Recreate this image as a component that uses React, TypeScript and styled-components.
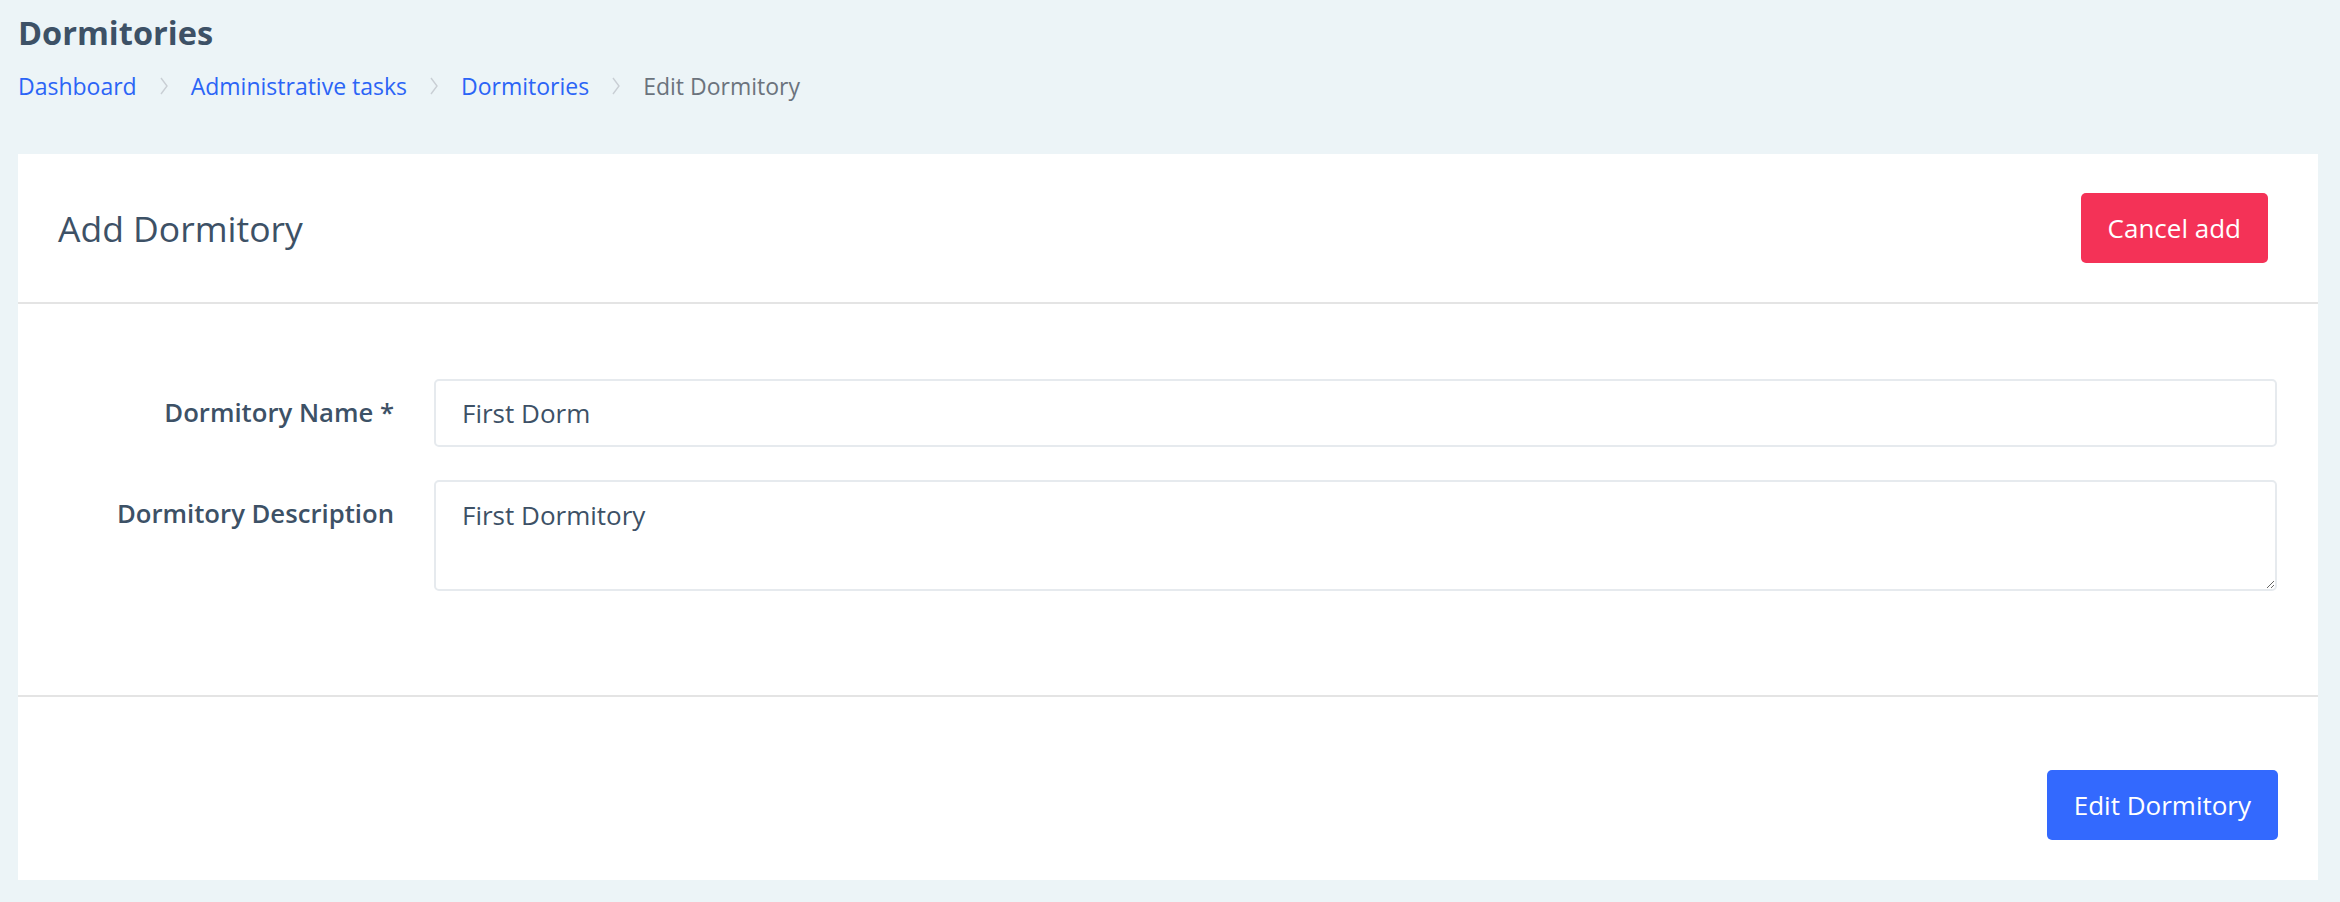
import styled, { createGlobalStyle } from "styled-components";

const GlobalStyle = createGlobalStyle`
  * {
    box-sizing: border-box;
  }
  body {
    margin: 0;
    background: #ecf4f7;
    font-family: "Open Sans", "Noto Sans", sans-serif;
    color: #3d5166;
  }
`;

const crumbs = [
  { label: "Dashboard", link: true },
  { label: "Administrative tasks", link: true },
  { label: "Dormitories", link: true },
  { label: "Edit Dormitory", link: false },
];

const Chevron = () => (
  <svg width="10" height="20" viewBox="0 0 10 20" fill="none">
    <polyline points="2,2 8,10 2,18" stroke="#c9ced4" strokeWidth="1.4" />
  </svg>
);

const App = () => {
  return (
    <Page>
      <GlobalStyle />
      <PageTitle>Dormitories</PageTitle>
      <Breadcrumb>
        {crumbs.map((c, i) => (
          <Crumb key={c.label}>
            {i > 0 && (
              <Separator>
                <Chevron />
              </Separator>
            )}
            {c.link ? <CrumbLink href="#">{c.label}</CrumbLink> : <Current>{c.label}</Current>}
          </Crumb>
        ))}
      </Breadcrumb>

      <Card>
        <CardHeader>
          <CardTitle>Add Dormitory</CardTitle>
          <Button $variant="danger">Cancel add</Button>
        </CardHeader>

        <CardBody>
          <FormGrid>
            <Label htmlFor="name">Dormitory Name *</Label>
            <TextInput id="name" defaultValue="First Dorm" />
            <Label htmlFor="desc">Dormitory Description</Label>
            <TextArea id="desc" defaultValue="First Dormitory" />
          </FormGrid>
        </CardBody>

        <CardFooter>
          <Button $variant="primary">Edit Dormitory</Button>
        </CardFooter>
      </Card>
    </Page>
  );
};

const Page = styled.div`
  padding: 14px 22px 22px 18px;
`;

const PageTitle = styled.h1`
  margin: 0;
  font-size: 32.5px;
  line-height: 38px;
  font-weight: 700;
  color: #3d5166;
`;

const Breadcrumb = styled.nav`
  display: flex;
  align-items: center;
  margin-top: 19px;
  height: 30px;
  font-size: 23px;
  line-height: 30px;
`;

const Crumb = styled.span`
  display: flex;
  align-items: center;
`;

const Separator = styled.span`
  display: flex;
  align-items: center;
  padding: 0 22px;
`;

const CrumbLink = styled.a`
  color: #2b64f6;
  text-decoration: none;
`;

const Current = styled.span`
  color: #6b737d;
`;

const Card = styled.section`
  margin-top: 53px;
  background: #ffffff;
`;

const CardHeader = styled.header`
  display: flex;
  align-items: center;
  justify-content: space-between;
  height: 150px;
  padding: 0 50px 0 40px;
  border-bottom: 2px solid #e4e4e4;
`;

const CardTitle = styled.h2`
  margin: 0;
  font-size: 35.5px;
  font-weight: 500;
  color: #3d5166;
`;

const Button = styled.button<{ $variant: "primary" | "danger" }>`
  height: 70px;
  padding: 0 27px;
  border: none;
  border-radius: 5px;
  font-family: inherit;
  font-size: 26px;
  color: #ffffff;
  background: ${(p) => (p.$variant === "danger" ? "#f43257" : "#3369fe")};
  cursor: pointer;
`;

const CardBody = styled.div`
  padding: 75px 41px 104px 40px;
  border-bottom: 2px solid #e4e4e4;
`;

const FormGrid = styled.div`
  display: grid;
  grid-template-columns: 336px 1fr;
  column-gap: 40px;
  row-gap: 33px;
`;

const Label = styled.label`
  align-self: start;
  padding-top: 17px;
  line-height: 34px;
  font-size: 25.7px;
  font-weight: 600;
  text-align: right;
  color: #3d5166;
`;

const TextInput = styled.input`
  height: 68px;
  padding: 0 26px;
  border: 2px solid #e6eaee;
  border-radius: 5px;
  font-family: inherit;
  font-size: 26px;
  color: #3d5166;
  outline: none;
`;

const TextArea = styled.textarea`
  height: 111px;
  padding: 16px 26px;
  border: 2px solid #e6eaee;
  border-radius: 5px;
  font-family: inherit;
  font-size: 26px;
  line-height: 34px;
  color: #3d5166;
  outline: none;
  resize: vertical;
`;

const CardFooter = styled.footer`
  display: flex;
  justify-content: flex-end;
  padding: 73px 40px 40px;
`;

export default App;
